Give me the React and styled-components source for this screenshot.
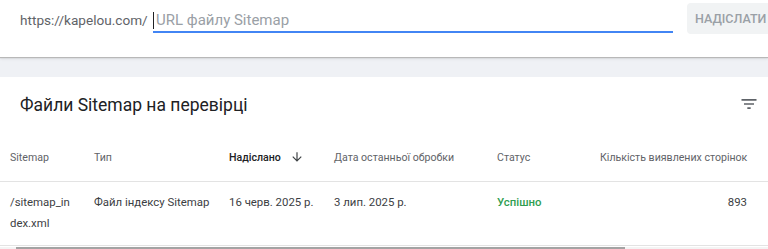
import React from 'react';
import styled, { createGlobalStyle } from 'styled-components';

const GlobalStyle = createGlobalStyle`
  html, body {
    margin: 0;
    padding: 0;
    background: #ffffff;
    font-family: Roboto, 'Noto Sans', Arial, sans-serif;
    overflow: hidden;
  }
`;

const Page = styled.div`
  width: 768px;
  height: 249px;
  overflow: hidden;
  background: #eff1f5;
`;

const SubmitBar = styled.div`
  display: flex;
  align-items: flex-start;
  height: 57px;
  padding-left: 20px;
  background: #ffffff;
  box-shadow: 0 1px 1px #b8b8b8, 0 2px 3px rgba(0, 0, 0, 0.08);
  position: relative;
  z-index: 1;
`;

const Prefix = styled.span`
  flex: 0 0 128px;
  margin-top: 10px;
  font-size: 13.6px;
  line-height: 20px;
  color: #5f6368;
  white-space: nowrap;
`;

const UrlField = styled.div`
  flex: 0 0 520px;
  display: flex;
  align-items: center;
  height: 22px;
  margin-top: 9px;
  margin-left: 5px;
  border-bottom: 2px solid #4285f4;
`;

const Caret = styled.span`
  width: 1px;
  height: 17px;
  margin-right: 2px;
  background: #202124;
`;

const Placeholder = styled.span`
  font-size: 15px;
  line-height: 20px;
  color: #9aa0a6;
`;

const SendButton = styled.button`
  flex: 0 0 auto;
  margin-left: 14px;
  margin-top: 3px;
  height: 31px;
  padding: 0 8px;
  border: none;
  border-radius: 4px;
  background: #f1f3f4;
  color: #9aa0a6;
  font-family: inherit;
  font-size: 12.5px;
  font-weight: 500;
  white-space: nowrap;
`;

const Card = styled.div`
  margin-top: 20px;
  background: #ffffff;
`;

const CardHead = styled.div`
  display: flex;
  align-items: center;
  justify-content: space-between;
  height: 56px;
  padding: 0 9px 0 20px;
`;

const Title = styled.h2`
  margin: 0;
  font-size: 17.5px;
  font-weight: 400;
  color: #202124;
`;

const IconButton = styled.span`
  display: flex;
  color: #5f6368;
  margin-top: -2px;
`;

const Table = styled.table`
  width: 100%;
  border-collapse: collapse;
  table-layout: fixed;
`;

const Th = styled.th`
  height: 48px;
  padding: 0 10px;
  text-align: ${p => (p.$right ? 'right' : 'left')};
  font-size: 10.6px;
  font-weight: ${p => (p.$active ? 500 : 400)};
  color: ${p => (p.$active ? '#202124' : '#5f6368')};
  white-space: nowrap;
  border-bottom: 1px solid #e3e3e3;
  ${p => p.$right && 'padding-right: 21px;'}
`;

const Td = styled.td`
  padding: 10px 10px 11px;
  vertical-align: top;
  text-align: ${p => (p.$right ? 'right' : 'left')};
  font-size: 11.4px;
  line-height: 21px;
  color: ${p => (p.$ok ? '#2f9e51' : '#3c4043')};
  font-weight: ${p => (p.$ok ? 500 : 400)};
  white-space: ${p => (p.$wrap ? 'normal' : 'nowrap')};
  word-break: ${p => (p.$wrap ? 'break-all' : 'normal')};
  border-bottom: 1px solid #e3e3e3;
  ${p => p.$right && 'padding-right: 21px;'}
`;

const SortLabel = styled.span`
  display: inline-flex;
  align-items: center;
  gap: 9px;
`;

const ScrollTrack = styled.div`
  height: 4px;
  margin-top: 1px;
  padding-left: 16px;
  background: #f4f4f4;
`;

const ScrollThumb = styled.div`
  width: 609px;
  height: 4px;
  background: #a3a3a3;
`;

const FilterIcon = () => (
  <svg width="20" height="20" viewBox="0 0 24 24" fill="currentColor">
    <path d="M10 18h4v-2h-4v2zM3 6v2h18V6H3zm3 7h12v-2H6v2z" />
  </svg>
);

const ArrowDown = () => (
  <svg width="14" height="14" viewBox="0 0 24 24" fill="#3c4043">
    <path d="M20 12l-1.41-1.41L13 16.17V4h-2v12.17l-5.58-5.59L4 12l8 8 8-8z" />
  </svg>
);

const columns = [84, 135, 105, 163, 103, 178];

export default function App() {
  return (
    <Page>
      <GlobalStyle />
      <SubmitBar>
        <Prefix>https://kapelou.com/</Prefix>
        <UrlField>
          <Caret />
          <Placeholder>URL файлу Sitemap</Placeholder>
        </UrlField>
        <SendButton>НАДІСЛАТИ</SendButton>
      </SubmitBar>
      <Card>
        <CardHead>
          <Title>Файли Sitemap на перевірці</Title>
          <IconButton>
            <FilterIcon />
          </IconButton>
        </CardHead>
        <Table>
          <colgroup>
            {columns.map((w, i) => (
              <col key={i} style={{ width: w }} />
            ))}
          </colgroup>
          <thead>
            <tr>
              <Th>Sitemap</Th>
              <Th>Тип</Th>
              <Th $active>
                <SortLabel>
                  Надіслано <ArrowDown />
                </SortLabel>
              </Th>
              <Th>Дата останньої обробки</Th>
              <Th>Статус</Th>
              <Th $right>Кількість виявлених сторінок</Th>
            </tr>
          </thead>
          <tbody>
            <tr>
              <Td $wrap>/sitemap_index.xml</Td>
              <Td>Файл індексу Sitemap</Td>
              <Td>16 черв. 2025 р.</Td>
              <Td>3 лип. 2025 р.</Td>
              <Td $ok>Успішно</Td>
              <Td $right>893</Td>
            </tr>
          </tbody>
        </Table>
        <ScrollTrack>
          <ScrollThumb />
        </ScrollTrack>
      </Card>
    </Page>
  );
}
